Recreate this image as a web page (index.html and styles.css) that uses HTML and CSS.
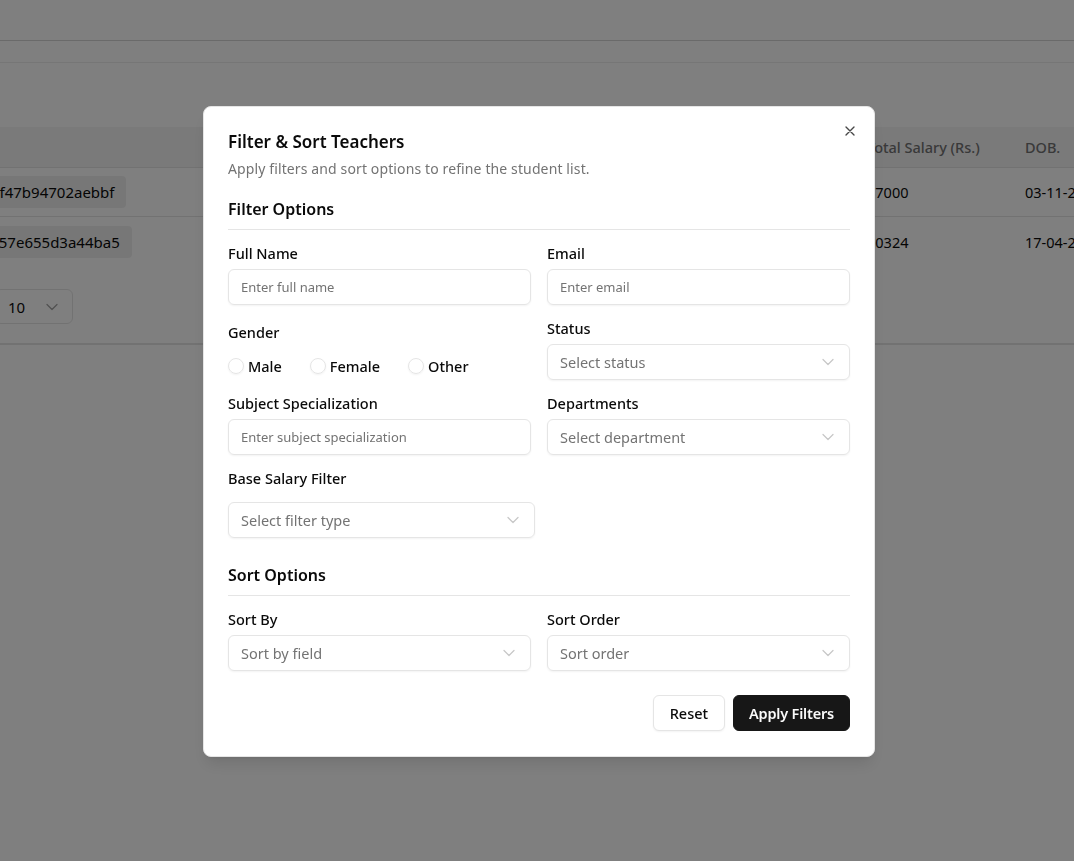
FILE: index.html
```html
<!DOCTYPE html>
<html lang="en">
<head>
<meta charset="utf-8">
<title>Teachers</title>
<link rel="stylesheet" href="styles.css">
</head>
<body>
<div class="page">
  <div class="topbar"></div>
  <div class="subbar"></div>
  <div class="card">
    <div class="table-wrap">
      <div class="trow thead">
        <div class="c c-id">ID</div>
        <div class="c c-mid">Name</div>
        <div class="c c-sal">Total Salary (Rs.)</div>
        <div class="c c-dob">DOB.</div>
      </div>
      <div class="trow tbody">
        <div class="c c-id"><span class="badge">67a4b2c1d3f47b94702aebbf</span></div>
        <div class="c c-mid">Teacher</div>
        <div class="c c-sal">37000</div>
        <div class="c c-dob">03-11-2000</div>
      </div>
      <div class="trow tbody">
        <div class="c c-id"><span class="badge">67a4b2c1e757e655d3a44ba5</span></div>
        <div class="c c-mid">Teacher</div>
        <div class="c c-sal">50324</div>
        <div class="c c-dob">17-04-2001</div>
      </div>
    </div>
    <div class="pager">
      <span class="pager-label">Rows per page</span>
      <div class="pager-select"><span>10</span>
        <svg class="chev" viewBox="0 0 24 24" width="20" height="20"><path d="M6 9l6 6 6-6" fill="none" stroke="currentColor" stroke-width="1.5" stroke-linecap="round" stroke-linejoin="round"/></svg>
      </div>
    </div>
  </div>
</div>

<div class="overlay"></div>

<div class="modal">
  <button class="close" aria-label="Close">
    <svg viewBox="0 0 24 24" width="16" height="16"><path d="M18 6L6 18M6 6l12 12" fill="none" stroke="currentColor" stroke-width="2" stroke-linecap="round"/></svg>
  </button>
  <div class="m-head">
    <h2 class="m-title">Filter &amp; Sort Teachers</h2>
    <p class="m-desc">Apply filters and sort options to refine the student list.</p>
  </div>

  <section class="sec">
    <h3 class="sec-title">Filter Options</h3>
    <div class="grid">
      <div class="field">
        <label class="lbl">Full Name</label>
        <div class="input">Enter full name</div>
      </div>
      <div class="field">
        <label class="lbl">Email</label>
        <div class="input">Enter email</div>
      </div>
      <div class="field">
        <label class="lbl">Gender</label>
        <div class="radios">
          <span class="radio"><span class="dot"></span>Male</span>
          <span class="radio"><span class="dot"></span>Female</span>
          <span class="radio"><span class="dot"></span>Other</span>
        </div>
      </div>
      <div class="field">
        <label class="lbl">Status</label>
        <div class="select"><span>Select status</span><svg class="chev" viewBox="0 0 24 24" width="20" height="20"><path d="M6 9l6 6 6-6" fill="none" stroke="currentColor" stroke-width="1.5" stroke-linecap="round" stroke-linejoin="round"/></svg></div>
      </div>
      <div class="field">
        <label class="lbl">Subject Specialization</label>
        <div class="input">Enter subject specialization</div>
      </div>
      <div class="field">
        <label class="lbl">Departments</label>
        <div class="select"><span>Select department</span><svg class="chev" viewBox="0 0 24 24" width="20" height="20"><path d="M6 9l6 6 6-6" fill="none" stroke="currentColor" stroke-width="1.5" stroke-linecap="round" stroke-linejoin="round"/></svg></div>
      </div>
      <div class="field">
        <label class="lbl">Base Salary Filter</label>
        <div class="select select-wide"><span>Select filter type</span><svg class="chev" viewBox="0 0 24 24" width="20" height="20"><path d="M6 9l6 6 6-6" fill="none" stroke="currentColor" stroke-width="1.5" stroke-linecap="round" stroke-linejoin="round"/></svg></div>
      </div>
    </div>
  </section>

  <section class="sec sec-sort">
    <h3 class="sec-title">Sort Options</h3>
    <div class="grid">
      <div class="field">
        <label class="lbl">Sort By</label>
        <div class="select"><span>Sort by field</span><svg class="chev" viewBox="0 0 24 24" width="20" height="20"><path d="M6 9l6 6 6-6" fill="none" stroke="currentColor" stroke-width="1.5" stroke-linecap="round" stroke-linejoin="round"/></svg></div>
      </div>
      <div class="field">
        <label class="lbl">Sort Order</label>
        <div class="select"><span>Sort order</span><svg class="chev" viewBox="0 0 24 24" width="20" height="20"><path d="M6 9l6 6 6-6" fill="none" stroke="currentColor" stroke-width="1.5" stroke-linecap="round" stroke-linejoin="round"/></svg></div>
      </div>
    </div>
  </section>

  <div class="actions">
    <button class="btn btn-outline">Reset</button>
    <button class="btn btn-dark">Apply Filters</button>
  </div>
</div>
</body>
</html>
```

FILE: styles.css
```css
* { box-sizing: border-box; }
html, body { margin: 0; padding: 0; }
body {
  font-family: "Noto Sans", "Open Sans", sans-serif;
  color: #0a0a0a;
  background: #ffffff;
  width: 1074px;
  height: 861px;
  overflow: hidden;
}

/* ---------- background page ---------- */
.page { height: 861px; }
.topbar { height: 41px; border-bottom: 1px solid #d4d4d4; }
.subbar { height: 22px; border-bottom: 1px solid #ececec; }
.card {
  margin-top: 64px;
  border-bottom: 2px solid #e5e5e5;
  overflow: hidden;
}
.table-wrap { overflow: hidden; }
.trow {
  display: flex;
  align-items: center;
  width: 1300px;
  margin-left: -98px;
  border-bottom: 1px solid #e5e5e5;
}
.thead { height: 41px; background: #f4f4f5; color: #737373; font-weight: 500; }
.tbody { height: 49px; }
.tbody:last-child { border-bottom: none; }
.c { font-size: 14.5px; white-space: nowrap; flex: none; }
.c-id { width: 340px; }
.c-mid { width: 625px; padding-left: 60px; }
.c-sal { width: 158px; }
.c-dob { width: 140px; }
.tbody .c-id { font-size: 15px; }
.badge {
  display: inline-block;
  background: #efefef;
  border-radius: 4px;
  padding: 5px 12px;
  line-height: 22px;
}
.pager {
  display: flex;
  align-items: center;
  gap: 12px;
  margin-left: -137px;
  padding: 23px 0 19px;
}
.pager-label { font-size: 14px; width: 120px; white-space: nowrap; }
.pager-select {
  width: 78px;
  height: 35px;
  border: 1px solid #e5e5e5;
  border-radius: 6px;
  display: flex;
  align-items: center;
  justify-content: space-between;
  padding: 0 10px 0 12px;
  font-size: 15px;
}
.pager-select .chev { color: #a3a3a3; }

.overlay {
  position: fixed;
  inset: 0;
  background: rgba(0, 0, 0, 0.5);
}

/* ---------- modal ---------- */
.modal {
  position: fixed;
  left: 203px;
  top: 106px;
  width: 672px;
  background: #ffffff;
  border: 1px solid #e5e5e5;
  border-radius: 8px;
  padding: 24px 24px 25px;
  box-shadow: 0 10px 15px -3px rgba(0,0,0,0.1), 0 4px 6px -4px rgba(0,0,0,0.1);
}
.close {
  position: absolute;
  top: 16px;
  right: 16px;
  width: 16px;
  height: 16px;
  padding: 0;
  border: 0;
  background: none;
  color: #0a0a0a;
  opacity: 0.75;
  display: flex;
}
.m-head { display: flex; flex-direction: column; gap: 6px; }
.m-title {
  margin: 0;
  font-size: 17px;
  line-height: 22px;
  font-weight: 600;
  color: #0a0a0a;
}
.m-desc {
  margin: 0;
  font-size: 14px;
  line-height: 20px;
  letter-spacing: 0.12px;
  color: #737373;
}
.sec { margin-top: 18px; }
.sec-sort { margin-top: 25px; }
.sec-title {
  margin: 0;
  font-size: 16px;
  line-height: 24px;
  font-weight: 600;
  padding-bottom: 8px;
  border-bottom: 1px solid #e5e5e5;
}
.grid {
  display: grid;
  grid-template-columns: 1fr 1fr;
  column-gap: 16px;
  row-gap: 13px;
  margin-top: 13px;
  align-items: center;
}
.field { display: flex; flex-direction: column; gap: 6px; }
.lbl { font-size: 14.5px; line-height: 20px; font-weight: 500; color: #0a0a0a; }
.input, .select {
  height: 36px;
  border: 1px solid #e5e5e5;
  border-radius: 6px;
  box-shadow: 0 1px 2px rgba(0,0,0,0.05);
  display: flex;
  align-items: center;
  padding: 0 12px;
  color: #737373;
}
.input { font-size: 13px; }
.select { font-size: 14.5px; justify-content: space-between; padding-right: 11px; }
.select .chev { color: #a3a3a3; opacity: 0.6; }
.select-wide { width: calc(100% + 4px); margin-top: 8px; }
.radios { display: flex; gap: 28px; padding-top: 8px; }
.radio { display: flex; align-items: center; gap: 4px; font-size: 14.5px; line-height: 20px; font-weight: 500; }
.dot {
  width: 16px;
  height: 16px;
  border-radius: 50%;
  border: 1px solid #e5e5e5;
  box-shadow: 0 1px 2px rgba(0,0,0,0.05);
}
.actions {
  display: flex;
  justify-content: flex-end;
  gap: 8px;
  margin-top: 24px;
}
.btn {
  height: 36px;
  padding: 0 16px;
  border-radius: 6px;
  font-family: inherit;
  font-size: 14.5px;
  font-weight: 500;
}
.btn-outline { background: #ffffff; border: 1px solid #e5e5e5; color: #0a0a0a; box-shadow: 0 1px 2px rgba(0,0,0,0.05); }
.btn-dark { background: #171717; border: 1px solid #171717; color: #fafafa; font-weight: 600; padding: 0 15px; letter-spacing: -0.2px; }
```
